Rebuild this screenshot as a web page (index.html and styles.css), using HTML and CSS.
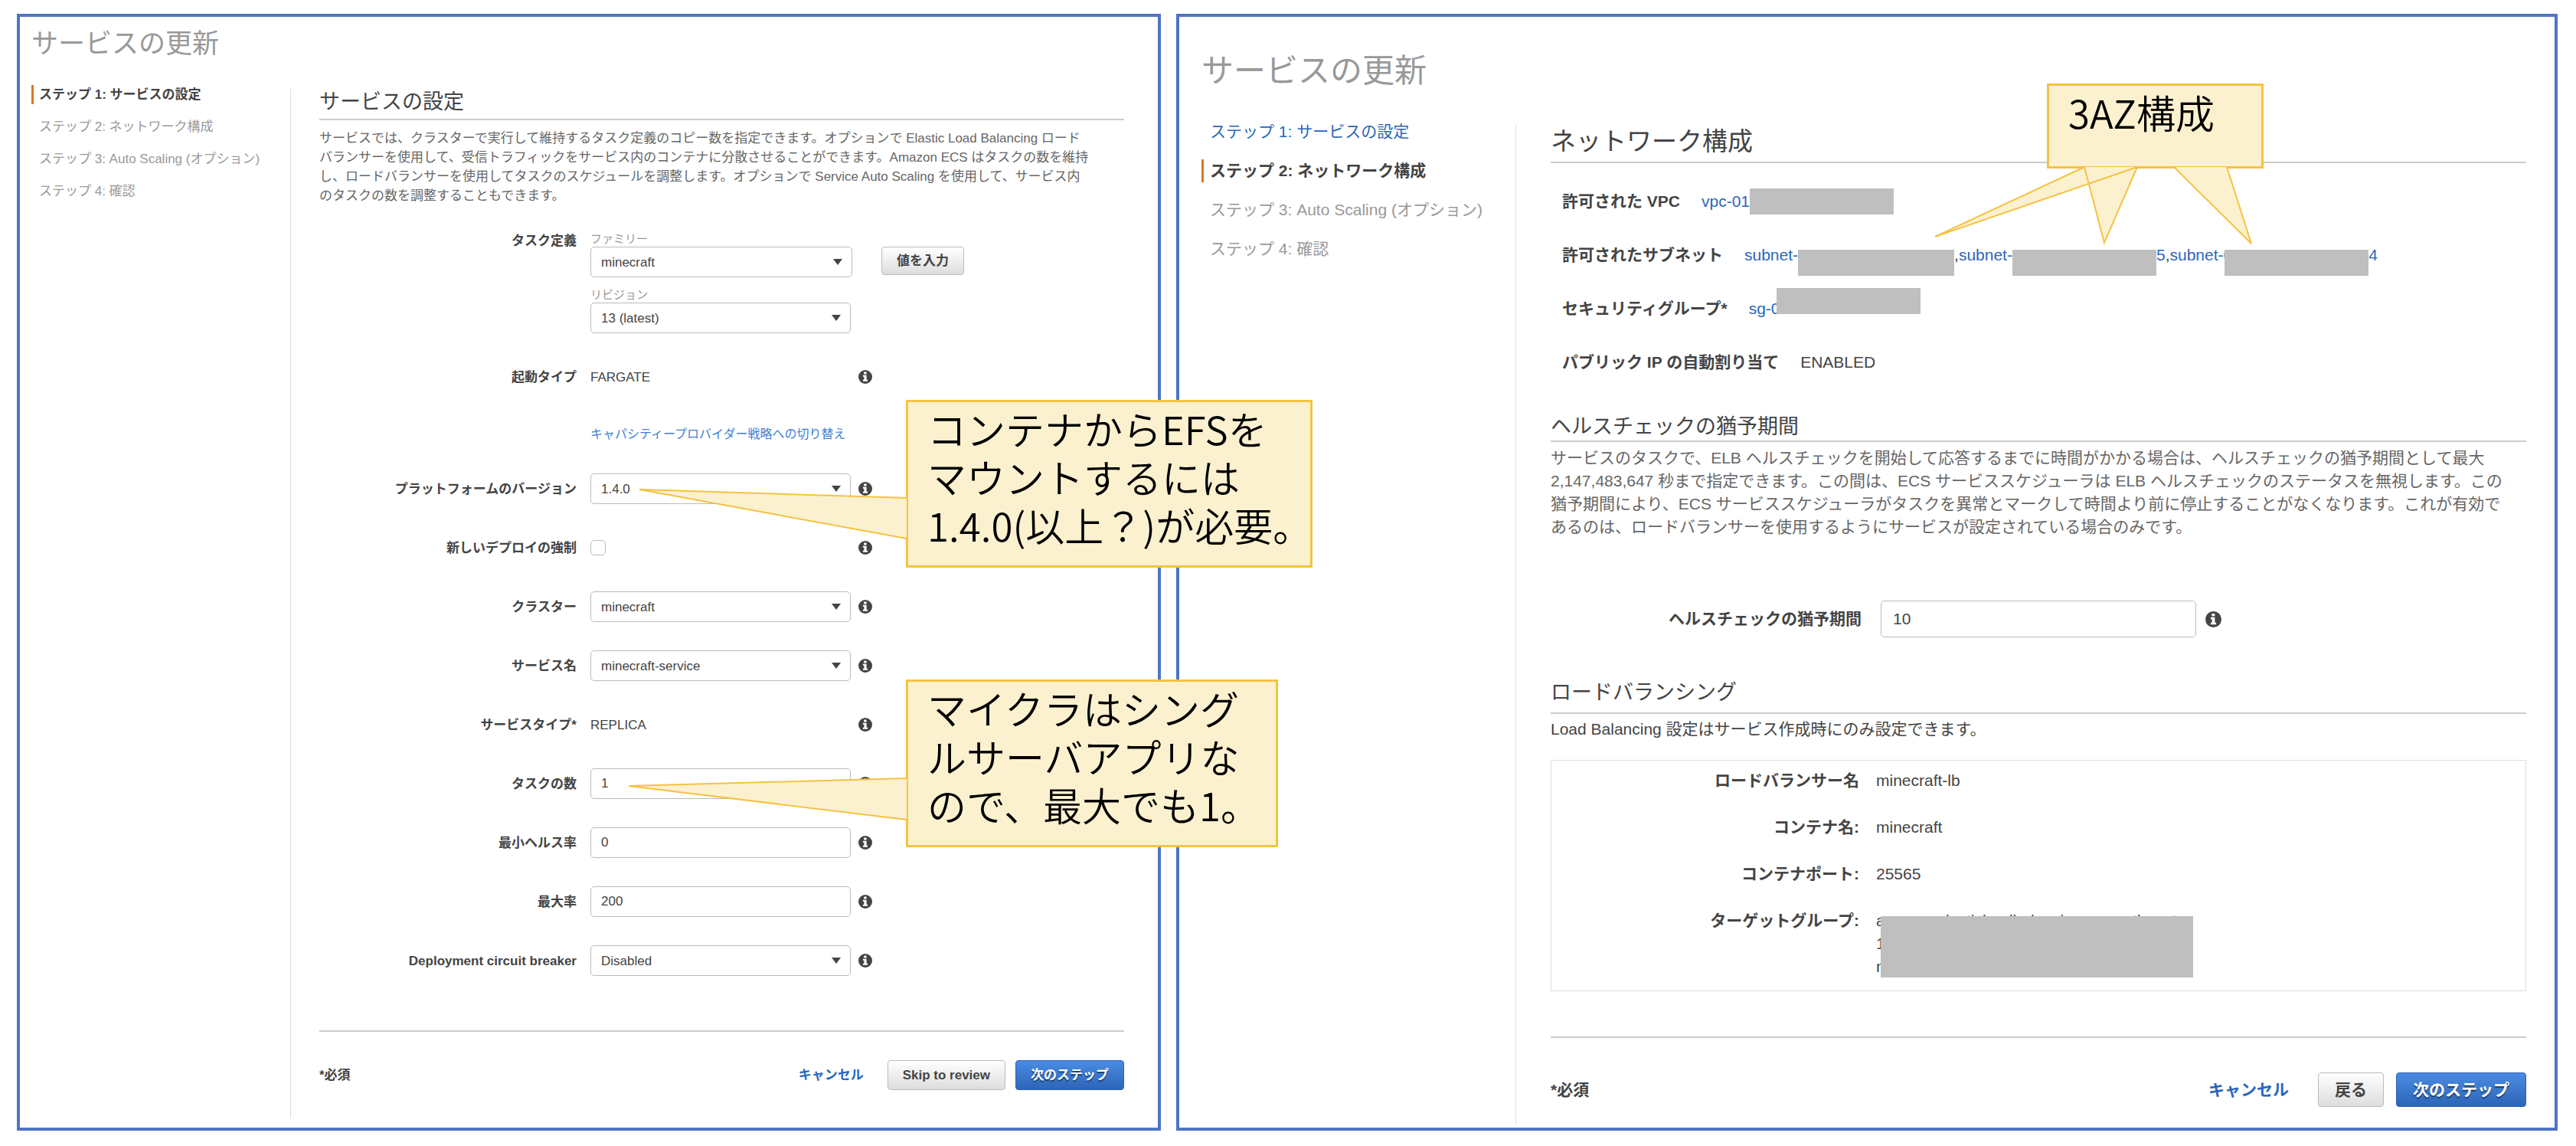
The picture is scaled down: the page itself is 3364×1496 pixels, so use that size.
FILE: index.html
```html
<!DOCTYPE html>
<html lang="ja">
<head>
<meta charset="utf-8">
<title>サービスの更新</title>
<meta name="viewport" content="width=device-width, initial-scale=1">
<link rel="stylesheet" href="styles.css">
</head>
<body>
<svg class="defs" aria-hidden="true">
  <symbol id="info" viewBox="0 0 18 18">
    <circle cx="9" cy="9" r="9" fill="#444"/>
    <path fill="#fff" d="M7.2 2.6h3.4v2.8H7.2zM5.9 6.7h4.7v6h1.5v2H5.9v-2h1.5v-4H5.9z"/>
  </symbol>
</svg>
<div class="board">

  <section class="panel panel-service">
    <h1 class="title">サービスの更新</h1>
    <div class="body">
      <nav class="steps">
        <div class="step current">ステップ 1: サービスの設定</div>
        <div class="step">ステップ 2: ネットワーク構成</div>
        <div class="step">ステップ 3: Auto Scaling (オプション)</div>
        <div class="step">ステップ 4: 確認</div>
      </nav>
      <form class="main">
        <h2 class="heading">サービスの設定</h2>
        <p class="intro">サービスでは、クラスターで実行して維持するタスク定義のコピー数を指定できます。オプションで Elastic Load Balancing ロード<br>バランサーを使用して、受信トラフィックをサービス内のコンテナに分散させることができます。Amazon ECS はタスクの数を維持<br>し、ロードバランサーを使用してタスクのスケジュールを調整します。オプションで Service Auto Scaling を使用して、サービス内<br>のタスクの数を調整することもできます。</p>

        <div class="fields">
          <div class="field field-task">
            <span class="label">タスク定義</span>
            <div class="stack">
              <label class="small" for="family">ファミリー</label>
              <div class="line">
                <span class="select select-wide"><select id="family"><option>minecraft</option></select></span>
                <button class="btn btn-value" type="button">値を入力</button>
              </div>
              <label class="small small-next" for="revision">リビジョン</label>
              <span class="select"><select id="revision"><option>13 (latest)</option></select></span>
            </div>
          </div>

          <div class="launch">
            <div class="field">
              <span class="label">起動タイプ</span>
              <span class="control">FARGATE</span>
              <svg class="info"><use href="#info"/></svg>
            </div>
            <a class="switch" href="#">キャパシティープロバイダー戦略への切り替え</a>
          </div>

          <div class="field">
            <label class="label" for="platform">プラットフォームのバージョン</label>
            <span class="select control"><select id="platform"><option>1.4.0</option></select></span>
            <svg class="info"><use href="#info"/></svg>
          </div>
          <div class="field">
            <label class="label" for="force">新しいデプロイの強制</label>
            <span class="control"><input class="check" type="checkbox" id="force"></span>
            <svg class="info"><use href="#info"/></svg>
          </div>
          <div class="field">
            <label class="label" for="cluster">クラスター</label>
            <span class="select control"><select id="cluster"><option>minecraft</option></select></span>
            <svg class="info"><use href="#info"/></svg>
          </div>
          <div class="field">
            <label class="label" for="service">サービス名</label>
            <span class="select control"><select id="service"><option>minecraft-service</option></select></span>
            <svg class="info"><use href="#info"/></svg>
          </div>
          <div class="field">
            <span class="label">サービスタイプ*</span>
            <span class="control">REPLICA</span>
            <svg class="info"><use href="#info"/></svg>
          </div>
          <div class="field">
            <label class="label" for="count">タスクの数</label>
            <input class="text control" id="count" type="text" value="1">
            <svg class="info"><use href="#info"/></svg>
          </div>
          <div class="field">
            <label class="label" for="min">最小ヘルス率</label>
            <input class="text control" id="min" type="text" value="0">
            <svg class="info"><use href="#info"/></svg>
          </div>
          <div class="field">
            <label class="label" for="max">最大率</label>
            <input class="text control" id="max" type="text" value="200">
            <svg class="info"><use href="#info"/></svg>
          </div>
          <div class="field">
            <label class="label" for="breaker">Deployment circuit breaker</label>
            <span class="select control"><select id="breaker"><option>Disabled</option></select></span>
            <svg class="info"><use href="#info"/></svg>
          </div>
        </div>

        <footer class="footer">
          <span class="required">*必須</span>
          <a class="cancel" href="#">キャンセル</a>
          <button class="btn" type="button">Skip to review</button>
          <button class="btn btn-primary" type="button">次のステップ</button>
        </footer>
      </form>
    </div>
  </section>

  <section class="panel panel-network">
    <h1 class="title">サービスの更新</h1>
    <div class="body">
      <nav class="steps">
        <a class="step" href="#">ステップ 1: サービスの設定</a>
        <div class="step current">ステップ 2: ネットワーク構成</div>
        <div class="step">ステップ 3: Auto Scaling (オプション)</div>
        <div class="step">ステップ 4: 確認</div>
      </nav>
      <form class="main">
        <h2 class="heading">ネットワーク構成</h2>
        <dl class="facts">
          <div class="fact"><dt>許可された VPC</dt><dd><a href="#">vpc-01</a><i class="mask"></i></dd></div>
          <div class="fact"><dt>許可されたサブネット</dt><dd class="low"><a href="#">subnet-</a><i class="mask mask-first"></i>,<a href="#">subnet-</a><i class="mask"></i><a href="#">5</a>,<a href="#">subnet-0</a><i class="mask mask-over"></i><a href="#">4</a></dd></div>
          <div class="fact"><dt>セキュリティグループ*</dt><dd class="high"><a href="#">sg-0</a><i class="mask mask-edge"></i></dd></div>
          <div class="fact"><dt>パブリック IP の自動割り当て</dt><dd>ENABLED</dd></div>
        </dl>

        <h3 class="subheading">ヘルスチェックの猶予期間</h3>
        <p class="intro">サービスのタスクで、ELB ヘルスチェックを開始して応答するまでに時間がかかる場合は、ヘルスチェックの猶予期間として最大<br>2,147,483,647 秒まで指定できます。この間は、ECS サービススケジューラは ELB ヘルスチェックのステータスを無視します。この<br>猶予期間により、ECS サービススケジューラがタスクを異常とマークして時間より前に停止することがなくなります。これが有効で<br>あるのは、ロードバランサーを使用するようにサービスが設定されている場合のみです。</p>
        <div class="field">
          <label class="label" for="grace">ヘルスチェックの猶予期間</label>
          <input class="text control" id="grace" type="text" value="10">
          <svg class="info"><use href="#info"/></svg>
        </div>

        <h3 class="subheading subheading-loose">ロードバランシング</h3>
        <p class="note-text">Load Balancing 設定はサービス作成時にのみ設定できます。</p>
        <dl class="box">
          <div class="pair"><dt>ロードバランサー名</dt><dd>minecraft-lb</dd></div>
          <div class="pair"><dt>コンテナ名:</dt><dd>minecraft</dd></div>
          <div class="pair"><dt>コンテナポート:</dt><dd>25565</dd></div>
          <div class="pair"><dt>ターゲットグループ:</dt><dd class="target">arn:aws:elasticloadbalancing:ap-northeast-<br>1<br>minecraft<i class="cover"></i></dd></div>
        </dl>

        <footer class="footer">
          <span class="required">*必須</span>
          <a class="cancel" href="#">キャンセル</a>
          <button class="btn" type="button">戻る</button>
          <button class="btn btn-primary" type="button">次のステップ</button>
        </footer>
      </form>
    </div>
  </section>

  <aside class="callout callout-efs">コンテナからEFSを<br>マウントするには<br>1.4.0(以上？)が必要。
    <svg class="pointer" viewBox="0 0 352 70"><path d="M351 13 2 2l349 64"/></svg>
  </aside>
  <aside class="callout callout-single">マイクラはシング<br>ルサーバアプリな<br>ので、最大でも1。
    <svg class="pointer" viewBox="0 0 366 60"><path d="M365 2 2 12l363 44"/></svg>
  </aside>
  <aside class="callout callout-az">3AZ構成
    <svg class="pointer" viewBox="0 0 420 104"><path d="M197 1 2 92 266 1M197 1l26 99L266 1M314 1l101 100L383 1"/></svg>
  </aside>
</div>
</body>
</html>
```
FILE: styles.css
```css
* { box-sizing: border-box; }

body {
  margin: 0;
  background: #fff;
  color: #444;
  font-family: "Liberation Sans", "Noto Sans CJK JP", sans-serif;
}

h1, h2, h3, p, dl, dd { margin: 0; font-weight: 400; }
a { color: #2a66bd; text-decoration: none; }
.defs { position: absolute; width: 0; height: 0; }

.board {
  position: relative;
  display: grid;
  grid-template-columns: 1494fr 1804fr;
  gap: 20px;
  padding: 18px 24px 18px 22px;
}

.panel { border: 4px solid #4f74c2; white-space: nowrap; }
.panel-service { padding: 14px 44px 12px 15px; font-size: 17px; line-height: 25px; }
.panel-network { padding: 46px 37px 4px 29px; font-size: 21px; line-height: 30px; }

.title { color: #999; }
.panel-service .title { font-size: 35px; line-height: 42px; margin-bottom: 33px; }
.panel-network .title { font-size: 42px; line-height: 50px; margin-bottom: 39px; }

.body { display: flex; align-items: flex-start; }
.steps { display: flex; flex-direction: column; flex: none; color: #999; }
.panel-service .steps { width: 338px; gap: 17px; }
.panel-network .steps { width: 410px; gap: 21px; }
.step { border-left: 3px solid transparent; padding-left: 8px; }
.panel-service .step { padding-left: 7px; }
.step.current { border-color: #d47a2a; color: #444; font-weight: 700; }

.main { flex: 1; min-width: 0; border-left: 1px solid #ddd; }
.panel-service .main { margin-top: 4px; padding: 0 0 37px 37px; }
.panel-network .main { margin-top: 6px; padding: 0 0 23px 45px; }

.heading, .subheading { border-bottom: 2px solid #ccc; }
.heading { font-size: 27px; line-height: 36px; padding-bottom: 4px; }
.panel-network .heading { font-size: 33px; line-height: 44px; padding-bottom: 4px; }
.subheading { margin-top: 49px; font-size: 27px; line-height: 36px; }
.subheading-loose { margin-top: 54px; padding-bottom: 8px; }
.intro { color: #666; }
.panel-service .intro { margin: 11px 0 34px; }
.panel-network .intro { margin: 6px 0 81px; }

.fields { display: flex; flex-direction: column; gap: 37px; }
.field { display: grid; align-items: center; }
.panel-service .field { grid-template-columns: 336px 340px auto; column-gap: 18px; min-height: 40px; }
.panel-service .field .info { margin-left: -8px; }
.panel-service .field-task { grid-template-columns: 336px 1fr; align-items: start; }
.panel-network .field { grid-template-columns: 406px 412px auto; column-gap: 25px; }
.panel-network .field .info { margin-left: -13px; }
.label { text-align: right; font-weight: 700; }
.info { width: 18px; height: 18px; }
.panel-network .info { width: 21px; height: 21px; }

.stack { display: flex; flex-direction: column; align-items: flex-start; }
.small { color: #999; font-size: 15px; line-height: 20px; }
.small-next { margin-top: 13px; }
.line { display: flex; gap: 38px; }
.launch { display: flex; flex-direction: column; }
.switch { margin: 41px 0 0 354px; font-size: 16px; line-height: 28px; color: #3d7fd6; }

.select { position: relative; display: block; width: 340px; }
.select-wide { width: 342px; }
.select::after {
  content: "";
  position: absolute;
  right: 13px;
  top: 16px;
  border: 6px solid transparent;
  border-top: 8px solid #444;
  border-bottom: 0;
  pointer-events: none;
}
.select select, .text {
  display: block;
  width: 100%;
  height: 40px;
  padding: 0 13px;
  border: 1px solid #bbb;
  border-radius: 5px;
  background: #fff;
  color: #444;
  font: inherit;
  appearance: none;
}
.panel-network .text { height: 48px; padding: 0 15px; }
.check {
  display: block;
  width: 20px;
  height: 20px;
  margin: 0;
  border: 1px solid #bbb;
  border-radius: 5px;
  background: #fff;
  appearance: none;
}

.btn {
  height: 39px;
  padding: 0 19px;
  border: 1px solid #bbb;
  border-radius: 4px;
  background: linear-gradient(#fff, #ddd);
  color: #444;
  font: inherit;
  font-weight: 700;
}
.btn-value { height: 37px; }
.btn-primary {
  border-color: #2a62b5;
  background: linear-gradient(#4a8be3, #2d65b8);
  color: #fff;
  text-shadow: 0 2px 1px rgba(0, 0, 0, .5);
}

.footer {
  display: flex;
  align-items: center;
  border-top: 2px solid #ccc;
  font-weight: 700;
}
.required { flex: 1; }
.panel-service .footer { margin-top: 71px; padding-top: 37px; }
.panel-service .cancel { margin-right: 31px; }
.panel-service .btn-primary { margin-left: 13px; }
.panel-network .footer { margin-top: 59px; padding-top: 45px; }
.panel-network .cancel { margin-right: 38px; }
.panel-network .btn { height: 45px; padding: 0 21px; }
.panel-network .btn-primary { margin-left: 16px; }

.facts { display: flex; flex-direction: column; gap: 36px; margin-top: 33px; padding-left: 15px; }
.fact { display: flex; align-items: center; gap: 28px; height: 34px; }
.fact dt, .pair dt { font-weight: 700; }
.fact dd { display: flex; align-items: center; }
.mask { position: relative; width: 188px; height: 34px; background: #bfbfbf; }
.mask-first { width: 204px; }
.mask-over { margin-left: -10px; }
.mask-edge { margin-left: -5px; }
.low .mask { margin-top: 10px; margin-bottom: -10px; }
.high .mask { margin-top: -10px; margin-bottom: 10px; }

.box {
  display: flex;
  flex-direction: column;
  gap: 31px;
  margin-top: 25px;
  padding: 11px 0 16px;
  border: 1px solid #ddd;
}
.note-text { margin-top: 5px; }
.pair { display: grid; grid-template-columns: 402px 1fr; column-gap: 22px; }
.pair dt { text-align: right; }
.target { position: relative; }
.cover { position: absolute; left: 6px; top: 9px; width: 408px; height: 80px; background: #bfbfbf; }

.callout {
  position: absolute;
  border: 3px solid #f5c242;
  background: #fcf1cf;
  color: #000;
  font-family: "Noto Sans CJK JP", sans-serif;
  font-weight: 350;
  font-size: 51px;
  line-height: 63px;
  white-space: nowrap;
}
.callout-efs { left: 1183px; top: 522px; width: 531px; height: 219px; padding: 3px 25px; }
.callout-single { left: 1183px; top: 887px; width: 486px; height: 219px; padding: 3px 25px; }
.callout-az { left: 2673px; top: 109px; width: 283px; height: 111px; padding: 3px 25px; }
.pointer { position: absolute; overflow: visible; }
.pointer path { fill: #fcf1cf; stroke: #f5c242; stroke-width: 2; }
.callout-efs .pointer { left: -353px; top: 112px; width: 352px; height: 70px; }
.callout-single .pointer { left: -367px; top: 124px; width: 366px; height: 60px; }
.callout-az .pointer { left: -151px; bottom: -104px; width: 420px; height: 104px; }
```
